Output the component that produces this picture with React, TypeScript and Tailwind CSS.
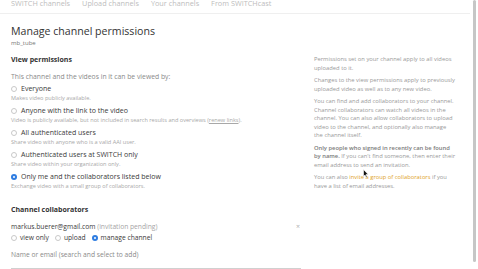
import { useState } from 'react';

type Visibility = 'everyone' | 'link' | 'aai' | 'org' | 'private';
type Role = 'view' | 'upload' | 'manage';

const NAV = ['SWITCH channels', 'Upload channels', 'Your channels', 'From SWITCHcast'];

const OPTIONS: { id: Visibility; label: string; hint: React.ReactNode }[] = [
  { id: 'everyone', label: 'Everyone', hint: 'Makes video publicly available.' },
  {
    id: 'link',
    label: 'Anyone with the link to the video',
    hint: (
      <>
        Video is publicly available, but not included in search results and overviews (
        <span className="underline">renew links</span>).
      </>
    ),
  },
  { id: 'aai', label: 'All authenticated users', hint: 'Share video with anyone who is a valid AAI user.' },
  { id: 'org', label: 'Authenticated users at SWITCH only', hint: 'Share video within your organization only.' },
  { id: 'private', label: 'Only me and the collaborators listed below', hint: 'Exchange video with a small group of collaborators.' },
];

function Radio({ checked }: { checked: boolean }) {
  if (checked) {
    return (
      <span className="w-[6px] h-[6px] shrink-0 rounded-full bg-[#2f7de1] flex items-center justify-center">
        <span className="w-[2px] h-[2px] rounded-full bg-white" />
      </span>
    );
  }
  return <span className="w-[6px] h-[6px] shrink-0 rounded-full border border-[#c9c9c9] bg-white" />;
}

export default function App() {
  const [visibility, setVisibility] = useState<Visibility>('private');
  const [role, setRole] = useState<Role>('manage');

  return (
    <div className="relative w-[478px] h-[269px] overflow-hidden bg-white font-['Open_Sans',sans-serif] text-[#333]">
      {/* top nav */}
      <nav className="flex h-[14px] mr-[8px] border-b border-[#efefef] pl-[11px] gap-[12px] text-[7.3px] leading-[7px] text-[#bdbdbd]">
        {NAV.map((n) => (
          <span key={n}>{n}</span>
        ))}
      </nav>

      <div className="pl-[11px]">
        <h1 className="mt-[11px] text-[10.6px] leading-[13px] text-[#333]">Manage channel permissions</h1>
        <p className="mt-[1px] text-[6px] leading-[8px] text-[#777]">mb_tube</p>

        <div className="flex mt-[8px] gap-[13px]">
          {/* left column */}
          <div className="w-[290px] shrink-0">
            <h2 className="text-[7px] leading-[9px] font-bold text-[#333]">View permissions</h2>
            <p className="mt-[8px] text-[6.8px] leading-[9px] text-[#8a8a8a]">
              This channel and the videos in it can be viewed by:
            </p>
            <div className="mt-[3px] flex flex-col gap-[4px]">
              {OPTIONS.map((o) => (
                <label key={o.id} className="block cursor-pointer" onClick={() => setVisibility(o.id)}>
                  <span className="flex items-center gap-[4px] text-[7px] leading-[9px] text-[#3a3a3a]">
                    <Radio checked={visibility === o.id} />
                    {o.label}
                  </span>
                  <span className="block mt-[1px] text-[5.6px] leading-[8px] text-[#a8a8a8]">{o.hint}</span>
                </label>
              ))}
            </div>

            <h2 className="mt-[15px] text-[7px] leading-[9px] font-bold text-[#333]">Channel collaborators</h2>
            <div className="mt-[8px] flex items-center justify-between text-[6.7px] leading-[9px]">
              <span className="text-[#3a3a3a]">
                markus.buerer@gmail.com <span className="text-[#a5a5a5]">(invitation pending)</span>
              </span>
              <span className="mr-[1px] text-[7px] text-[#b0b0b0]">×</span>
            </div>
            <div className="mt-[2px] flex items-center gap-[6px] text-[6.7px] leading-[9px] text-[#3a3a3a]">
              {(['view', 'upload', 'manage'] as Role[]).map((r) => (
                <label key={r} className="flex items-center gap-[3px] cursor-pointer" onClick={() => setRole(r)}>
                  <Radio checked={role === r} />
                  {r === 'view' ? 'view only' : r === 'upload' ? 'upload' : 'manage channel'}
                </label>
              ))}
            </div>
            <p className="mt-[8px] text-[6.7px] leading-[9px] text-[#8a8a8a]">Name or email (search and select to add)</p>
            <input
              type="text"
              placeholder="Start typing to search..."
              className="mt-[1px] w-full h-[14px] px-[3px] border border-[#d0d0d0] text-[6.5px] outline-none placeholder:text-[#a0a0a0]"
            />
          </div>

          {/* right column */}
          <div className="w-[154px] shrink-0 flex flex-col gap-[3.8px] text-[5.8px] leading-[8.6px] text-[#999] whitespace-pre-line">
            <p>{'Permissions set on your channel apply to all videos\nuploaded to it.'}</p>
            <p>{'Changes to the view permissions apply to previously\nuploaded video as well as to any new video.'}</p>
            <p>
              {'You can find and add collaborators to your channel.\nChannel collaborators can watch all videos in the\nchannel. You can also allow collaborators to upload\nvideo to the channel, and optionally also manage\nthe channel itself.'}
            </p>
            <p>
              <span className="font-semibold text-[#7a7a7a]">{'Only people who signed in recently can be found\nby name.'}</span>
              {" If you can't find someone, then enter their\nemail address to send an invitation."}
            </p>
            <p>
              You can also <span className="text-[#e0a21f]">invite a group of collaborators</span>
              {' if you\nhave a list of email addresses.'}
            </p>
          </div>
        </div>
      </div>

      {/* scrollbar thumb */}
      <div className="absolute left-[473px] top-0 w-[3px] h-[262px] rounded-full bg-[#c6c6c6]" />

      {/* mouse pointer */}
      <svg className="absolute left-[363px] top-[169px]" width="6" height="9" viewBox="0 0 6 9">
        <path d="M0.5 0.5 L0.5 7.5 L2 6 L3.2 8.5 L4.2 8 L3 5.5 L5.2 5.5 Z" fill="#111" stroke="#fff" strokeWidth="0.6" />
      </svg>
    </div>
  );
}
